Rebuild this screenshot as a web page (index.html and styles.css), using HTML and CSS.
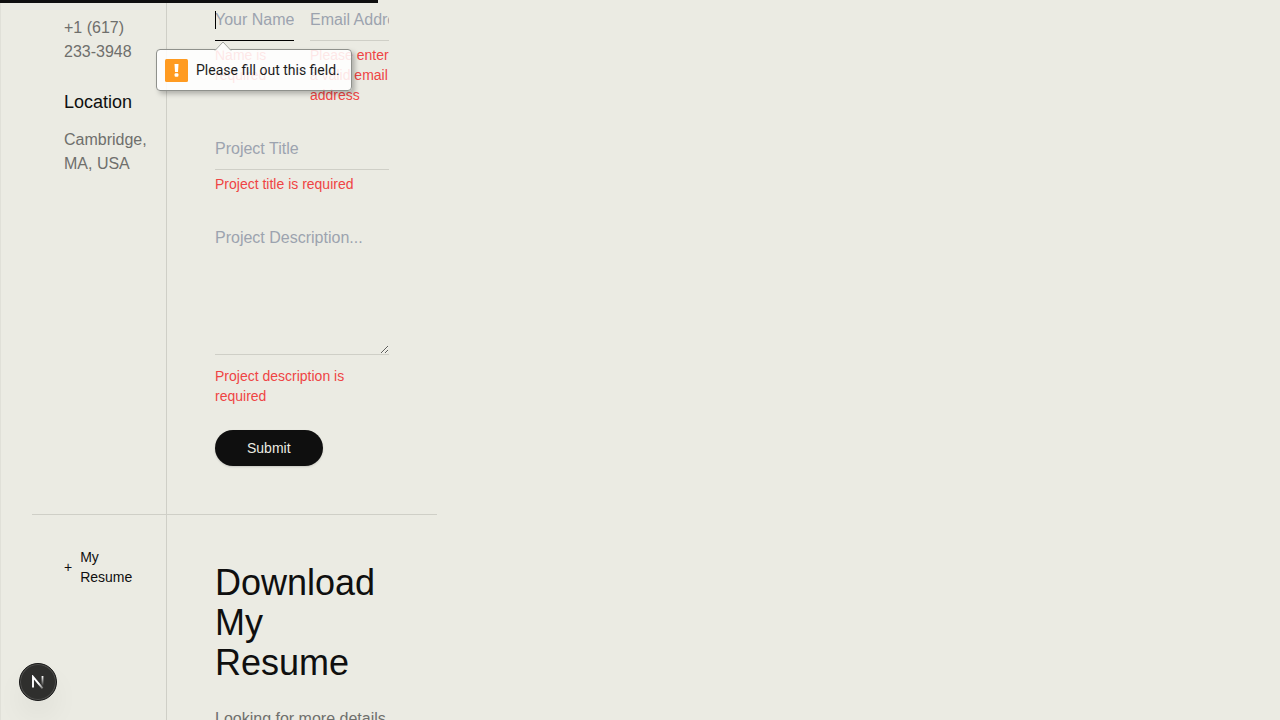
FILE: index.html
```html
<!DOCTYPE html>
<html lang="en">
<head>
<meta charset="utf-8">
<title>Contact</title>
<link rel="stylesheet" href="styles.css">
</head>
<body>
<div class="scroll-progress"></div>
<main class="page">
  <section class="section">
    <div class="side">
      <p class="muted">+1 (617) 233-3948</p>
      <h3 class="side-title">Location</h3>
      <p class="muted">Cambridge, MA, USA</p>
    </div>
    <form class="form" novalidate>
      <div class="pair">
        <div class="field field-focused">
          <input class="control" id="name" type="text" placeholder="Your Name" aria-label="Your Name" required>
          <p class="error">Name is required</p>
          <div class="bubble" role="alert">
            <svg class="bubble-arrow" width="18" height="10" viewBox="0 0 18 10"><path d="M1 9.5 9 1l8 8.5" fill="#fdfdfb" stroke="#a3a5a0"/></svg>
            <svg class="bubble-icon" width="23" height="23" viewBox="0 0 23 23"><rect width="23" height="23" rx="1.5" fill="#ff9b21"/><path d="M9.5 5h4l-.5 8h-3z" fill="#fff"/><rect x="9.6" y="14.3" width="3.8" height="3.4" rx="1" fill="#fff"/></svg>
            <span>Please fill out this field.</span>
          </div>
        </div>
        <div class="field">
          <input class="control" id="email" type="email" placeholder="Email Address" aria-label="Email Address" required>
          <p class="error">Please enter a valid email address</p>
        </div>
      </div>
      <div class="field">
        <input class="control" id="title" type="text" placeholder="Project Title" aria-label="Project Title" required>
        <p class="error">Project title is required</p>
      </div>
      <div class="field field-area">
        <textarea class="control area" id="description" placeholder="Project Description..." aria-label="Project Description" required></textarea>
        <p class="error">Project description is required</p>
      </div>
      <button class="submit" type="submit">Submit</button>
    </form>
  </section>
  <section class="section">
    <div class="side side-resume">
      <div class="label"><span>+</span><span>My Resume</span></div>
    </div>
    <div class="content">
      <h2 class="headline">Download My Resume</h2>
      <p class="muted">Looking for more details</p>
    </div>
  </section>
</main>
<button class="badge" type="button" aria-label="Open developer tools">
  <svg width="14" height="14" viewBox="0 0 14 14" fill="none">
    <defs>
      <linearGradient id="diag" gradientUnits="userSpaceOnUse" x1="8" y1="8.5" x2="12" y2="13.5"><stop stop-color="#fff"/><stop offset="1" stop-color="#fff" stop-opacity="0.3"/></linearGradient>
      <linearGradient id="stem" gradientUnits="userSpaceOnUse" x1="11" y1="1" x2="11" y2="11"><stop stop-color="#fff"/><stop offset="1" stop-color="#fff" stop-opacity="0"/></linearGradient>
    </defs>
    <path d="M2 12.4V1.8l9.6 11.6" stroke="url(#diag)" stroke-width="1.9"/>
    <path d="M11.5 1v10" stroke="url(#stem)" stroke-width="1.8"/>
  </svg>
</button>
</body>
</html>
```

FILE: styles.css
```css
* {
  box-sizing: border-box;
  margin: 0;
}

body {
  height: 100vh;
  overflow: hidden;
  background: #ebebe3;
  border-left: 1px solid #e0e0d8;
  color: #0f0f0f;
  font: 16px/24px "Liberation Sans", Arial, sans-serif;
}

.scroll-progress {
  position: fixed;
  top: 0;
  left: 0;
  z-index: 5;
  width: 29.5%;
  height: 3px;
  background: #0f0f0f;
}

.page {
  max-width: 436px;
  padding-left: 31px;
}

.section {
  display: grid;
  grid-template-columns: 1fr 2fr;
  border-bottom: 1px solid #cfcfc7;
}

.side {
  padding: 16px 16px 32px 32px;
  border-right: 1px solid #cfcfc7;
}

.side-resume {
  padding-top: 32px;
}

.side-title {
  margin: 24px 0 12px;
  font-size: 18px;
  line-height: 28px;
  font-weight: 400;
}

.muted {
  color: #6f6f6c;
}

.form {
  display: flex;
  flex-direction: column;
  align-items: stretch;
  gap: 24px;
  padding: 0 48px 48px;
}

.pair {
  display: grid;
  grid-template-columns: 1fr 1fr;
  gap: 16px;
}

.field {
  display: flex;
  flex-direction: column;
  gap: 4px;
  min-width: 0;
}

.field-area {
  gap: 11px;
}

.field-focused {
  position: relative;
}

.field-focused::before {
  content: "";
  position: absolute;
  top: 11px;
  left: 0;
  width: 1px;
  height: 18px;
  background: #000;
}

.control {
  display: block;
  width: 100%;
  padding: 8px 0;
  border: 0;
  border-bottom: 1px solid #cfcfc7;
  border-radius: 0;
  outline: 0;
  background: transparent;
  color: inherit;
  font: inherit;
}

.control::placeholder {
  color: #9ca3af;
  opacity: 1;
}

.field-focused .control {
  border-color: #000;
}

.area {
  height: 137px;
  resize: vertical;
}

.error {
  color: #ef4444;
  font-size: 14px;
  line-height: 20px;
}

.submit {
  align-self: flex-start;
  height: 36px;
  padding: 0 32px;
  border: 0;
  border-radius: 18px;
  background: #0f0f0f;
  color: #ebebe3;
  font: 14px/20px "Liberation Sans", Arial, sans-serif;
  box-shadow: 0 1px 2px rgba(0, 0, 0, 0.15);
}

.label {
  display: flex;
  align-items: center;
  gap: 8px;
  font-size: 14px;
  line-height: 20px;
}

.content {
  display: flex;
  flex-direction: column;
  gap: 24px;
  padding: 48px;
}

.headline {
  font-size: 36px;
  line-height: 40px;
  font-weight: 400;
}

.bubble {
  position: absolute;
  top: 49px;
  left: -59px;
  z-index: 3;
  display: flex;
  align-items: center;
  gap: 8px;
  min-width: 196px;
  height: 42px;
  padding: 0 8px;
  border: 1px solid #8f918c;
  border-radius: 4px;
  background: rgba(255, 255, 255, 0.87);
  color: #1c1c1c;
  box-shadow: 3px 3px 5px rgba(0, 0, 0, 0.25);
  font: 14px/20px Roboto, sans-serif;
  white-space: nowrap;
}

.bubble-arrow {
  position: absolute;
  top: -9px;
  left: 57px;
}

.badge {
  position: fixed;
  left: 19px;
  bottom: 19px;
  display: flex;
  align-items: center;
  justify-content: center;
  width: 38px;
  height: 38px;
  padding: 0;
  border: 1px solid #171717;
  border-radius: 50%;
  background: #2f2f2d;
  box-shadow: inset 0 0 0 1px #50504e, 0 16px 32px -8px rgba(0, 0, 0, 0.14);
}
```
